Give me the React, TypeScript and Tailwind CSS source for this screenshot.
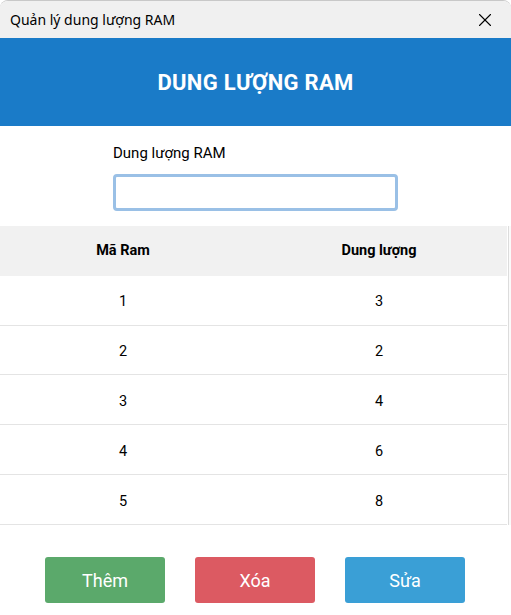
import { X } from 'lucide-react'

const RAMS = [
  { id: 1, size: 3 },
  { id: 2, size: 2 },
  { id: 3, size: 4 },
  { id: 4, size: 6 },
  { id: 5, size: 8 },
]

export default function App() {
  return (
    <div className="w-[511px] h-[615px] bg-white overflow-hidden rounded-t-lg border-t border-[#c8c8c8] flex flex-col font-['Roboto',sans-serif] text-black">
      {/* Title bar */}
      <div className="h-[37px] bg-[#f0f0f0] flex items-center justify-between pl-[10px] pr-[15px] shrink-0">
        <span className="text-[14px] font-['Noto_Sans',sans-serif]">Quản lý dung lượng RAM</span>
        <X size={22} strokeWidth={1.2} />
      </div>

      {/* Header */}
      <div className="h-[88px] bg-[#1a7bc8] flex items-center justify-center shrink-0">
        <h1 className="text-white text-[22px] font-bold tracking-[0.3px]">DUNG LƯỢNG RAM</h1>
      </div>

      <div className="flex flex-1 min-h-0">
        <div className="flex-1 flex flex-col">
          {/* Form */}
          <div className="h-[100px] pl-[113px] pt-[17px]">
            <label className="block text-[15px] leading-[20px]">Dung lượng RAM</label>
            <input className="mt-[11px] w-[285px] h-[37px] rounded-[4px] border-[3px] border-[#9ac0e6] outline-none" />
          </div>

          {/* Table */}
          <div className="flex h-[50px] bg-[#f1f1f1] items-center font-bold text-[14.5px] pt-[1px]">
            <div className="w-[246px] text-center">Mã Ram</div>
            <div className="flex-1 text-center pl-[5px]">Dung lượng</div>
          </div>
          {RAMS.map(r => (
            <div key={r.id} className="flex h-[50px] items-center border-b border-[#e4e4e4] text-[14.5px] pt-[4px]">
              <div className="w-[246px] text-center">{r.id}</div>
              <div className="flex-1 text-center pl-[5px]">{r.size}</div>
            </div>
          ))}
        </div>
        <div className="w-[4px] flex flex-col">
          <div className="h-[100px]" />
          <div className="h-[300px] border-l border-[#dcdcdc] ml-[1px] bg-[#fafafa]" />
        </div>
      </div>

      {/* Buttons */}
      <div className="h-[90px] flex items-start gap-[30px] pl-[45px] pt-[32px] shrink-0">
        <button className="w-[120px] h-[46px] rounded-[3px] bg-[#5ba96b] text-white text-[18px]">Thêm</button>
        <button className="w-[120px] h-[46px] rounded-[3px] bg-[#dc5a62] text-white text-[18px]">Xóa</button>
        <button className="w-[120px] h-[46px] rounded-[3px] bg-[#3a9fd6] text-white text-[18px]">Sửa</button>
      </div>
    </div>
  )
}
